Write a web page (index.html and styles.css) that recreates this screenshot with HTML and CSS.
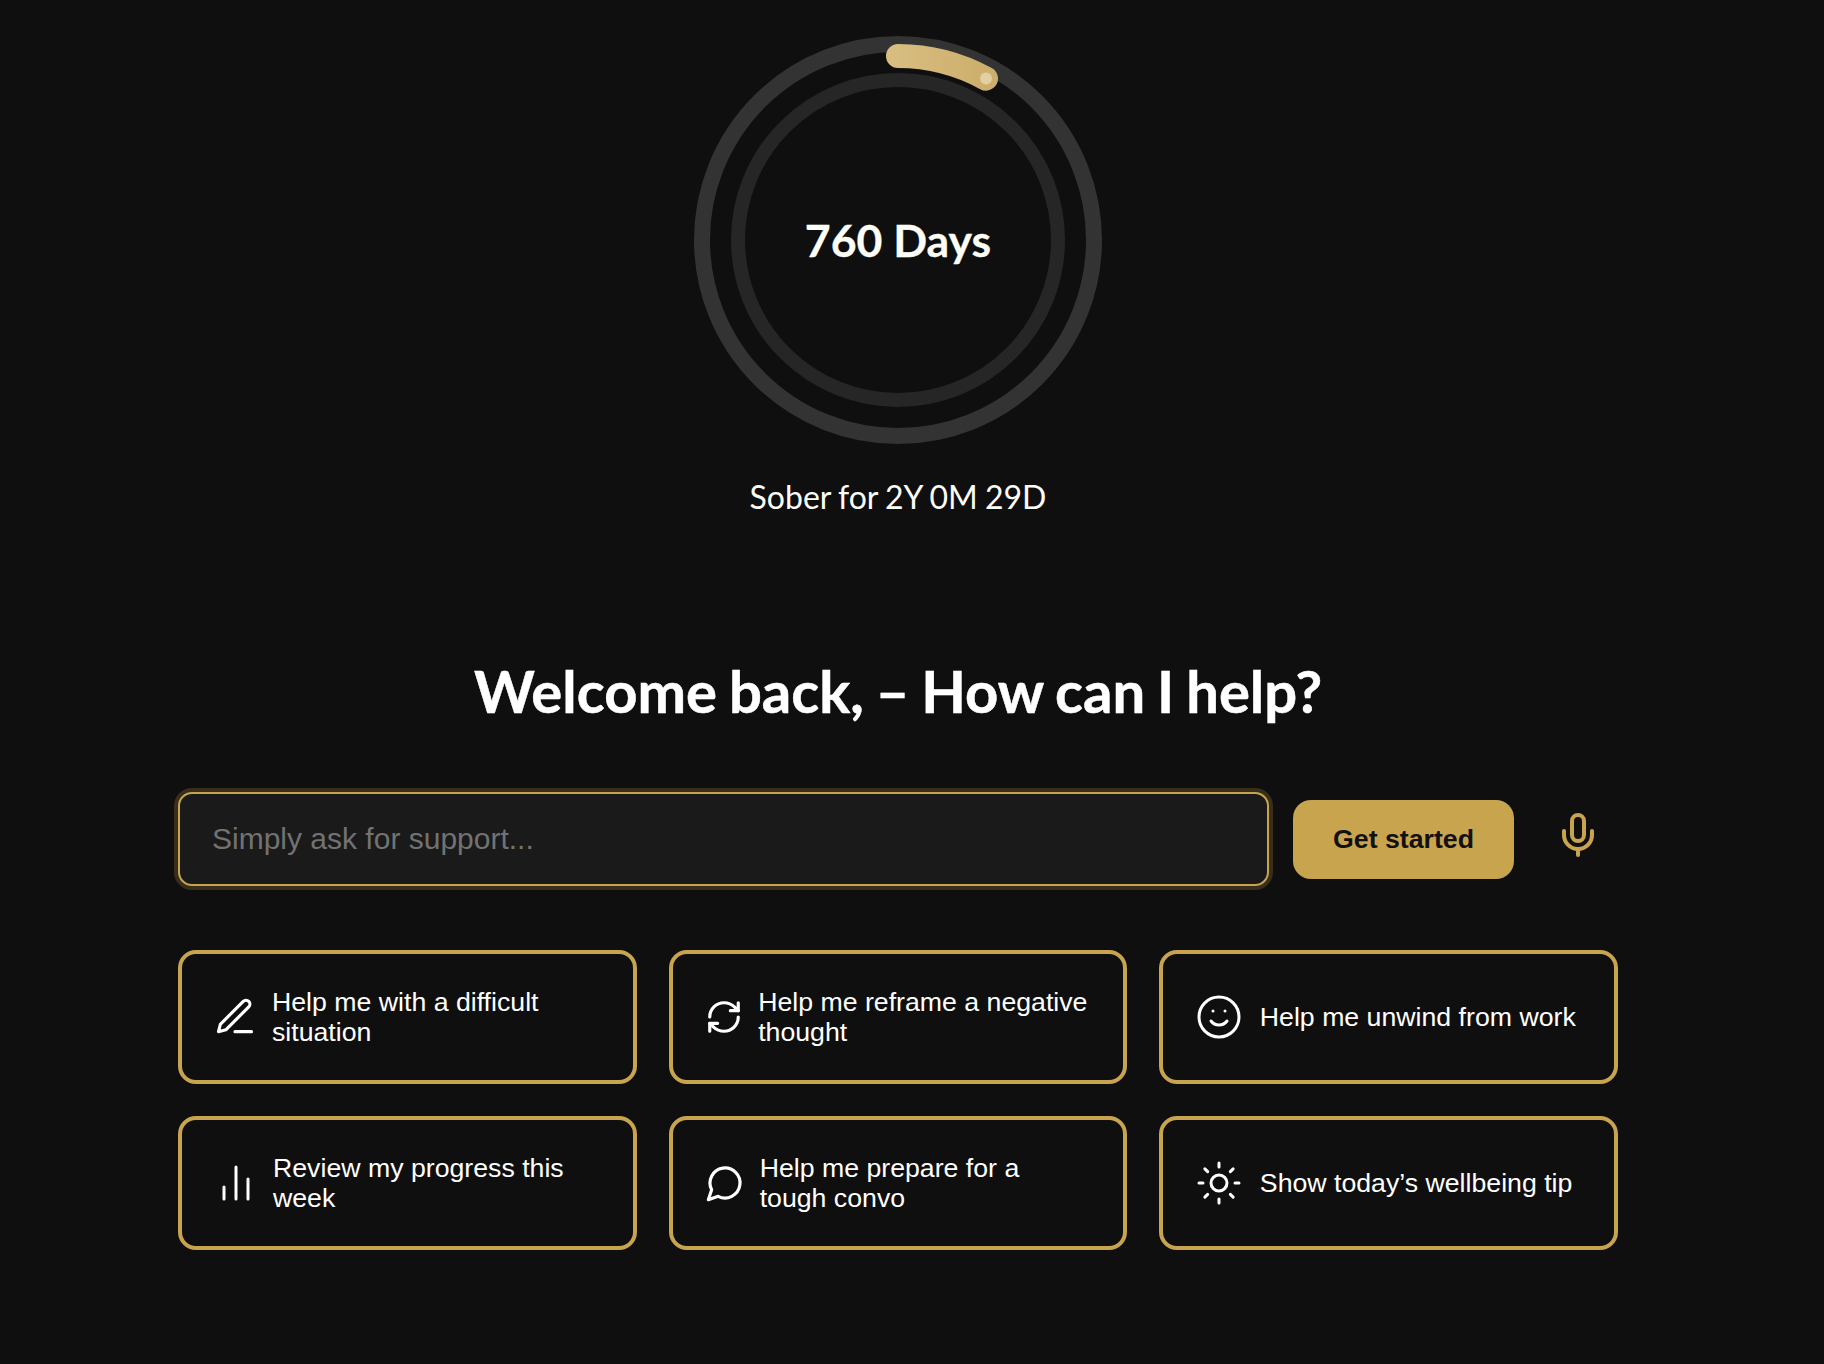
FILE: index.html
```html
<!DOCTYPE html>
<html lang="en">
<head>
<meta charset="utf-8">
<title>Welcome back</title>
<link rel="stylesheet" href="styles.css">
</head>
<body>
<main class="page">
  <section class="ring-section">
    <div class="ring">
      <svg class="ring-svg" viewBox="0 0 420 420" width="420" height="420" aria-hidden="true">
        <defs>
          <linearGradient id="gold" x1="0" y1="0" x2="1" y2="0">
            <stop offset="0" stop-color="#d8bd80"/>
            <stop offset="1" stop-color="#cdae6c"/>
          </linearGradient>
        </defs>
        <circle cx="210" cy="210" r="196" fill="none" stroke="#333333" stroke-width="16"/>
        <circle cx="210" cy="210" r="160" fill="none" stroke="#262626" stroke-width="14"/>
        <path d="M210 26 A184 184 0 0 1 298 48.6" fill="none" stroke="url(#gold)" stroke-width="24" stroke-linecap="round"/>
        <circle cx="298" cy="48.6" r="6" fill="#e2d0a4"/>
      </svg>
      <div class="ring-label">760 Days</div>
    </div>
    <p class="sober">Sober for 2Y 0M 29D</p>
  </section>

  <h1 class="title">Welcome back, – How can I help?</h1>

  <div class="ask-row">
    <input class="ask-input" type="text" placeholder="Simply ask for support...">
    <button class="ask-btn" type="button">Get started</button>
    <svg class="mic" viewBox="0 0 24 24" width="48" height="48" fill="none" stroke="currentColor" stroke-width="2" stroke-linecap="round" stroke-linejoin="round" aria-hidden="true">
      <path d="M12 2a3 3 0 0 0-3 3v7a3 3 0 0 0 6 0V5a3 3 0 0 0-3-3Z"/>
      <path d="M19 10v2a7 7 0 0 1-14 0v-2"/>
      <line x1="12" x2="12" y1="19" y2="22"/>
    </svg>
  </div>

  <div class="cards">
    <button class="card" type="button">
      <svg class="icon icon-pen" viewBox="0 0 24 24" fill="none" stroke="currentColor" stroke-width="1.7" stroke-linecap="round" stroke-linejoin="round" aria-hidden="true"><path d="M12 20h9"/><path d="M16.5 3.5a2.12 2.12 0 0 1 3 3L7 19l-4 1 1-4Z"/></svg>
      <span>Help me with a difficult situation</span>
    </button>
    <button class="card" type="button">
      <svg class="icon icon-refresh" viewBox="0 0 24 24" fill="none" stroke="currentColor" stroke-width="2" stroke-linecap="round" stroke-linejoin="round" aria-hidden="true"><path d="M3 12a9 9 0 0 1 9-9 9.75 9.75 0 0 1 6.74 2.74L21 8"/><path d="M21 3v5h-5"/><path d="M21 12a9 9 0 0 1-9 9 9.75 9.75 0 0 1-6.74-2.74L3 16"/><path d="M8 16H3v5"/></svg>
      <span>Help me reframe a negative thought</span>
    </button>
    <button class="card" type="button">
      <svg class="icon icon-large" viewBox="0 0 24 24" fill="none" stroke="currentColor" stroke-width="1.5" stroke-linecap="round" stroke-linejoin="round" aria-hidden="true"><circle cx="12" cy="12" r="10"/><path d="M8 14s1.5 2 4 2 4-2 4-2"/><line x1="9" x2="9.01" y1="9" y2="9"/><line x1="15" x2="15.01" y1="9" y2="9"/></svg>
      <span>Help me unwind from work</span>
    </button>
    <button class="card" type="button">
      <svg class="icon icon-bars" viewBox="0 0 24 24" fill="none" stroke="currentColor" stroke-width="1.5" stroke-linecap="round" stroke-linejoin="round" aria-hidden="true"><line x1="18" x2="18" y1="20" y2="10"/><line x1="12" x2="12" y1="20" y2="4"/><line x1="6" x2="6" y1="20" y2="14"/></svg>
      <span>Review my progress this week</span>
    </button>
    <button class="card" type="button">
      <svg class="icon icon-chat" viewBox="0 0 24 24" fill="none" stroke="currentColor" stroke-width="1.9" stroke-linecap="round" stroke-linejoin="round" aria-hidden="true"><path d="M7.9 20A9 9 0 1 0 4 16.1L2 22Z"/></svg>
      <span>Help me prepare for a tough convo</span>
    </button>
    <button class="card" type="button">
      <svg class="icon icon-large" viewBox="0 0 24 24" fill="none" stroke="currentColor" stroke-width="1.5" stroke-linecap="round" stroke-linejoin="round" aria-hidden="true"><circle cx="12" cy="12" r="4"/><path d="M12 2v2"/><path d="M12 20v2"/><path d="m4.93 4.93 1.41 1.41"/><path d="m17.66 17.66 1.41 1.41"/><path d="M2 12h2"/><path d="M20 12h2"/><path d="m6.34 17.66-1.41 1.41"/><path d="m19.07 4.93-1.41 1.41"/></svg>
      <span>Show today’s wellbeing tip</span>
    </button>
  </div>
</main>
</body>
</html>
```
FILE: styles.css
```css
* { box-sizing: border-box; }

html, body { margin: 0; padding: 0; }

body {
  background: #0f0f0f;
  color: #fff;
  font-family: "Liberation Sans", Arial, sans-serif;
  min-height: 1364px;
}

.page {
  width: 1440px;
  margin-left: 178px;
  padding-top: 30px;
  display: flex;
  flex-direction: column;
  align-items: stretch;
}

.ring-section {
  display: flex;
  flex-direction: column;
  align-items: center;
}

.ring {
  display: grid;
  width: 420px;
  height: 420px;
}

.ring-svg, .ring-label { grid-area: 1 / 1; }

.ring-svg { display: block; }

.ring-label {
  align-self: center;
  justify-self: center;
  font-family: Lato, sans-serif;
  font-weight: 700;
  font-size: 44.6px;
  line-height: 1.2;
  color: #fdfdf8;
  -webkit-text-stroke: 0.3px #fdfdf8;
}

.sober {
  margin: 28px 0 0;
  font-family: Lato, sans-serif;
  font-size: 32px;
  line-height: 38px;
  word-spacing: -1px;
  color: #fdfdf8;
}

.title {
  margin: 140px 0 0;
  text-align: center;
  font-family: Lato, sans-serif;
  font-weight: 700;
  font-size: 58px;
  line-height: 70px;
  word-spacing: -2.2px;
  color: #fff;
  -webkit-text-stroke: 0.5px #fff;
}

.ask-row {
  margin-top: 66px;
  display: flex;
  align-items: center;
}

.ask-input {
  width: 1091px;
  height: 94px;
  flex: none;
  padding: 0 32px;
  background: #1a1a1a;
  border: 2px solid #c9a44f;
  border-radius: 14px;
  box-shadow: 0 0 0 4px rgba(201, 164, 79, 0.22);
  color: #fff;
  font-family: "Liberation Sans", Arial, sans-serif;
  font-size: 30px;
  outline: none;
}

.ask-input::placeholder { color: #727272; opacity: 1; }

.ask-btn {
  flex: none;
  width: 221px;
  height: 79px;
  margin-left: 24px;
  border: 0;
  border-radius: 18px;
  background: #c9a44f;
  color: #111;
  font-family: "Liberation Sans", Arial, sans-serif;
  font-weight: 700;
  font-size: 26.7px;
}

.mic {
  flex: none;
  margin: -8px 0 0 40px;
  color: #c9a44f;
}

.cards {
  margin-top: 64px;
  display: grid;
  grid-template-columns: repeat(3, 1fr);
  grid-auto-rows: 134px;
  gap: 32px 32px;
}

.card {
  display: flex;
  align-items: center;
  padding: 0 32px;
  background: transparent;
  border: 4px solid #c9a44f;
  border-radius: 18px;
  color: #fff;
  font-family: "Liberation Sans", Arial, sans-serif;
  font-size: 26.7px;
  line-height: 30.5px;
  text-align: left;
}

.icon { flex: none; display: block; }

.icon-pen { width: 44px; height: 44px; margin: 0 15px 0 -1px; }
.icon-bars { width: 48px; height: 48px; margin: 0 13px 0 -2px; }
.icon-refresh { width: 38px; height: 38px; margin-right: 15.5px; }
.icon-chat { width: 40px; height: 40px; margin-right: 15px; }
.icon-large { width: 48px; height: 48px; margin-right: 16.5px; }
```
